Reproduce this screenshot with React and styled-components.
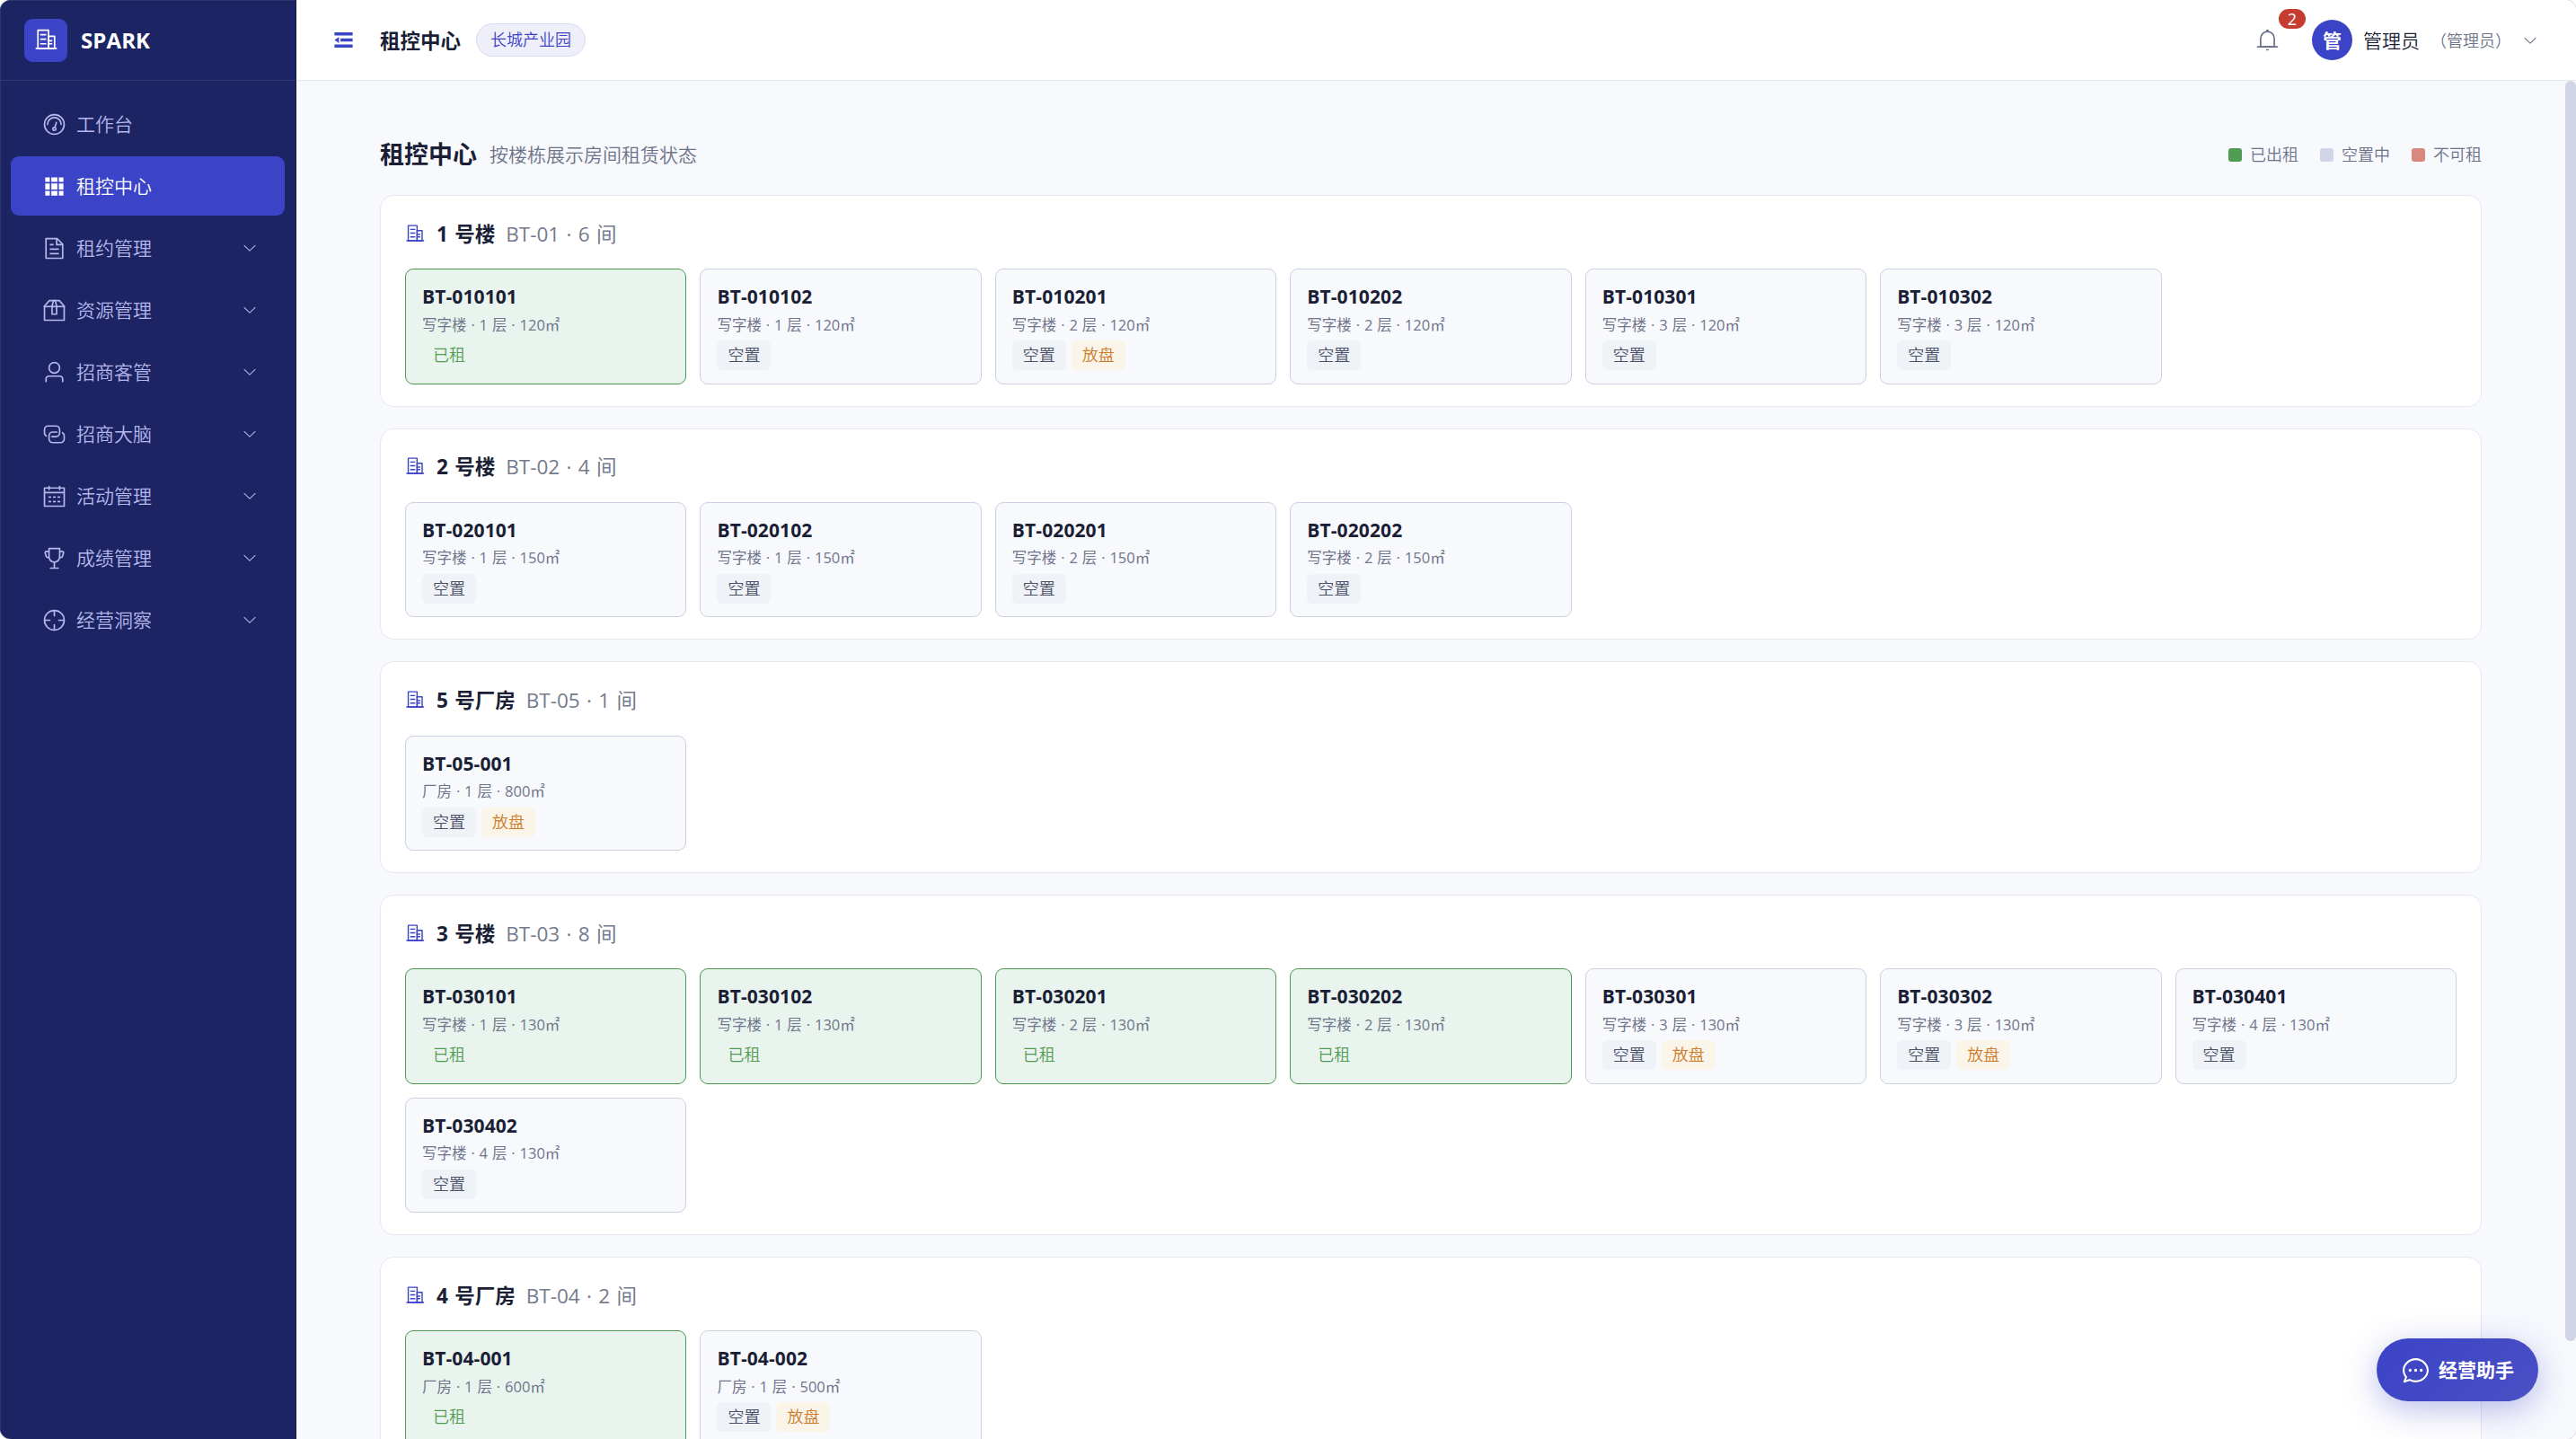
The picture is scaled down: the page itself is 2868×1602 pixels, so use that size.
import React from "react";
import styled, { createGlobalStyle, css } from "styled-components";

const ICONS = {
  building: [
    "M192 128v704h384V128zm-32-64h448a32 32 0 0 1 32 32v768a32 32 0 0 1-32 32H160a32 32 0 0 1-32-32V96a32 32 0 0 1 32-32",
    "M256 256h256v64H256zm0 192h256v64H256zm0 192h256v64H256zm384-128h128v64H640zm0 128h128v64H640zM64 832h896v64H64z",
    "M640 384v448h192V384zm-32-64h256a32 32 0 0 1 32 32v512a32 32 0 0 1-32 32H608a32 32 0 0 1-32-32V352a32 32 0 0 1 32-32",
  ],
  odometer: [
    "M512 896a384 384 0 1 0 0-768 384 384 0 0 0 0 768m0 64a448 448 0 1 1 0-896 448 448 0 0 1 0 896",
    "M192 512a320 320 0 1 1 640 0 32 32 0 1 1-64 0 256 256 0 1 0-512 0 32 32 0 0 1-64 0",
    "M570.432 627.84A96 96 0 1 1 509.568 608l60.992-187.776A32 32 0 1 1 631.424 440l-60.992 187.776zM502.08 734.464a32 32 0 1 0 19.84-60.928 32 32 0 0 0-19.84 60.928",
  ],
  grid: [
    "M640 384v256H384V384zm64 0h192v256H704zm-64 512H384V704h256zm64 0V704h192v192zm-64-768v192H384V128zm64 0h192v192H704zM320 384v256H128V384zm0 512H128V704h192zm0-768v192H128V128z",
  ],
  document: [
    "M832 384H576V128H192v768h640zm-26.496-64L640 154.496V320zM160 64h480l256 256v608a32 32 0 0 1-32 32H160a32 32 0 0 1-32-32V96a32 32 0 0 1 32-32m160 448h384v64H320zm0-192h160v64H320zm0 384h384v64H320z",
  ],
  box: [
    "M317.056 128 128 344.064V896h768V344.064L706.944 128zm-14.528-64h418.944a32 32 0 0 1 24.064 10.88l206.528 236.096A32 32 0 0 1 960 332.032V928a32 32 0 0 1-32 32H96a32 32 0 0 1-32-32V332.032a32 32 0 0 1 7.936-21.12L278.4 75.008A32 32 0 0 1 302.528 64",
    "M64 320h896v64H64z",
    "M448 327.872V640h128V327.872L526.08 128h-28.16zM448 64h128l64 256v352a32 32 0 0 1-32 32H416a32 32 0 0 1-32-32V320z",
  ],
  user: [
    "M512 512a192 192 0 1 0 0-384 192 192 0 0 0 0 384m0 64a256 256 0 1 1 0-512 256 256 0 0 1 0 512m320 320v-96a96 96 0 0 0-96-96H288a96 96 0 0 0-96 96v96a32 32 0 1 1-64 0v-96a160 160 0 0 1 160-160h448a160 160 0 0 1 160 160v96a32 32 0 1 1-64 0",
  ],
  connection: [
    "M640 384v64H448a128 128 0 0 0-128 128v128a128 128 0 0 0 128 128h320a128 128 0 0 0 128-128V576a128 128 0 0 0-64-110.848V394.88c74.56 26.368 128 97.472 128 181.056v128a192 192 0 0 1-192 192H448a192 192 0 0 1-192-192V576a192 192 0 0 1 192-192z",
    "M384 640v-64h192a128 128 0 0 0 128-128V320a128 128 0 0 0-128-128H256a128 128 0 0 0-128 128v128a128 128 0 0 0 64 110.848v70.272A192.06 192.06 0 0 1 64 448V320a192 192 0 0 1 192-192h320a192 192 0 0 1 192 192v128a192 192 0 0 1-192 192z",
  ],
  calendar: [
    "M128 384v512h768V192H768v32a32 32 0 1 1-64 0v-32H320v32a32 32 0 0 1-64 0v-32H128v128h768v64zm192-256h384V96a32 32 0 1 1 64 0v32h160a32 32 0 0 1 32 32v768a32 32 0 0 1-32 32H96a32 32 0 0 1-32-32V160a32 32 0 0 1 32-32h160V96a32 32 0 0 1 64 0zm-32 384h64a32 32 0 0 1 0 64h-64a32 32 0 0 1 0-64m0 192h64a32 32 0 1 1 0 64h-64a32 32 0 1 1 0-64m192-192h64a32 32 0 0 1 0 64h-64a32 32 0 0 1 0-64m0 192h64a32 32 0 1 1 0 64h-64a32 32 0 1 1 0-64m192-192h64a32 32 0 1 1 0 64h-64a32 32 0 1 1 0-64m0 192h64a32 32 0 1 1 0 64h-64a32 32 0 1 1 0-64",
  ],
  trophy: [
    "M480 896V702.08A256.256 256.256 0 0 1 264.064 512h-32.64a96 96 0 0 1-91.968-68.416L93.632 290.88a76.8 76.8 0 0 1 73.6-98.88H256V96a32 32 0 0 1 32-32h448a32 32 0 0 1 32 32v96h88.768a76.8 76.8 0 0 1 73.6 98.88L884.48 443.52A96 96 0 0 1 792.576 512h-32.64A256.256 256.256 0 0 1 544 702.08V896h128a32 32 0 1 1 0 64H352a32 32 0 1 1 0-64zm224-448V128H320v320a192 192 0 1 0 384 0m64 0h24.576a32 32 0 0 0 30.656-22.784l45.824-152.768A12.8 12.8 0 0 0 856.768 256H768zm-512 0V256h-88.768a12.8 12.8 0 0 0-12.288 16.448l45.824 152.768A32 32 0 0 0 231.424 448z",
  ],
  aim: [
    "M512 896a384 384 0 1 0 0-768 384 384 0 0 0 0 768m0 64a448 448 0 1 1 0-896 448 448 0 0 1 0 896",
    "M512 96a32 32 0 0 1 32 32v192a32 32 0 0 1-64 0V128a32 32 0 0 1 32-32m0 576a32 32 0 0 1 32 32v192a32 32 0 1 1-64 0V704a32 32 0 0 1 32-32M96 512a32 32 0 0 1 32-32h192a32 32 0 0 1 0 64H128a32 32 0 0 1-32-32m576 0a32 32 0 0 1 32-32h192a32 32 0 1 1 0 64H704a32 32 0 0 1-32-32",
  ],
  fold: [
    "M896 192H128v128h768zm0 256H384v128h512zm0 256H128v128h768zM320 384 128 512l192 128z",
  ],
  bell: [
    "M512 64a64 64 0 0 1 64 64v64H448v-64a64 64 0 0 1 64-64",
    "M256 768h512V448a256 256 0 1 0-512 0zm256-640a320 320 0 0 1 320 320v384H192V448a320 320 0 0 1 320-320",
    "M96 768h832q32 0 32 32t-32 32H96q-32 0-32-32t32-32m352 128h128a64 64 0 0 1-128 0",
  ],
  arrowDown: [
    "M831.872 340.864 512 652.672 192.128 340.864a30.592 30.592 0 0 0-42.752 0 29.12 29.12 0 0 0 0 41.6L489.664 714.24a32 32 0 0 0 44.672 0l340.288-331.712a29.12 29.12 0 0 0 0-41.728 30.592 30.592 0 0 0-42.752 0z",
  ],
  chat: [
    "m174.72 855.68 135.296-45.12 23.68 11.84C388.096 849.536 448.576 864 512 864c211.84 0 384-166.784 384-352S723.84 160 512 160 128 326.784 128 512c0 69.12 24.96 139.264 70.848 199.232l22.08 28.8-46.272 115.584zm-45.248 82.56A32 32 0 0 1 89.6 896l58.368-145.92C94.72 680.32 64 596.864 64 512 64 299.904 256 96 512 96s448 203.904 448 416-192 416-448 416a461.06 461.06 0 0 1-206.912-48.384l-175.616 58.56z",
    "M512 563.2a51.2 51.2 0 1 1 0-102.4 51.2 51.2 0 0 1 0 102.4m192 0a51.2 51.2 0 1 1 0-102.4 51.2 51.2 0 0 1 0 102.4m-384 0a51.2 51.2 0 1 1 0-102.4 51.2 51.2 0 0 1 0 102.4",
  ],
};

const MENU = [
  { icon: "odometer", label: "工作台" },
  { icon: "grid", label: "租控中心", active: true },
  { icon: "document", label: "租约管理", sub: true },
  { icon: "box", label: "资源管理", sub: true },
  { icon: "user", label: "招商客管", sub: true },
  { icon: "connection", label: "招商大脑", sub: true },
  { icon: "calendar", label: "活动管理", sub: true },
  { icon: "trophy", label: "成绩管理", sub: true },
  { icon: "aim", label: "经营洞察", sub: true },
];

const LEGEND = [
  { color: "#529b53", label: "已出租" },
  { color: "#d0d5e5", label: "空置中" },
  { color: "#d98880", label: "不可租" },
];

const room = (code, type, floor, area, rented = false, listed = false) => ({
  code,
  type,
  floor,
  area,
  rented,
  listed,
});

const BUILDINGS = [
  {
    name: "1 号楼",
    code: "BT-01",
    rooms: [
      room("BT-010101", "写字楼", 1, 120, true),
      room("BT-010102", "写字楼", 1, 120),
      room("BT-010201", "写字楼", 2, 120, false, true),
      room("BT-010202", "写字楼", 2, 120),
      room("BT-010301", "写字楼", 3, 120),
      room("BT-010302", "写字楼", 3, 120),
    ],
  },
  {
    name: "2 号楼",
    code: "BT-02",
    rooms: [
      room("BT-020101", "写字楼", 1, 150),
      room("BT-020102", "写字楼", 1, 150),
      room("BT-020201", "写字楼", 2, 150),
      room("BT-020202", "写字楼", 2, 150),
    ],
  },
  {
    name: "5 号厂房",
    code: "BT-05",
    rooms: [room("BT-05-001", "厂房", 1, 800, false, true)],
  },
  {
    name: "3 号楼",
    code: "BT-03",
    rooms: [
      room("BT-030101", "写字楼", 1, 130, true),
      room("BT-030102", "写字楼", 1, 130, true),
      room("BT-030201", "写字楼", 2, 130, true),
      room("BT-030202", "写字楼", 2, 130, true),
      room("BT-030301", "写字楼", 3, 130, false, true),
      room("BT-030302", "写字楼", 3, 130, false, true),
      room("BT-030401", "写字楼", 4, 130),
      room("BT-030402", "写字楼", 4, 130),
    ],
  },
  {
    name: "4 号厂房",
    code: "BT-04",
    rooms: [
      room("BT-04-001", "厂房", 1, 600, true),
      room("BT-04-002", "厂房", 1, 500, false, true),
    ],
  },
];

const Icon = ({ name, size }) => (
  <Svg viewBox="0 0 1024 1024" $size={size}>
    {ICONS[name].map((d) => (
      <path key={d} d={d} />
    ))}
  </Svg>
);

const RoomCard = ({ data }) => (
  <Card $rented={data.rented}>
    <RoomCode>{data.code}</RoomCode>
    <RoomMeta>
      {data.type} · {data.floor} 层 · {data.area}㎡
    </RoomMeta>
    <Tags>
      {data.rented ? (
        <Tag $kind="rented">已租</Tag>
      ) : (
        <Tag $kind="vacant">空置</Tag>
      )}
      {data.listed && <Tag $kind="listed">放盘</Tag>}
    </Tags>
  </Card>
);

const App = () => {
  return (
    <Window>
      <GlobalStyle />
      <Sidebar>
        <Brand>
          <Logo>
            <Icon name="building" size={27} />
          </Logo>
          <BrandName>SPARK</BrandName>
        </Brand>
        <Menu>
          {MENU.map((e) => (
            <MenuItem key={e.label} $active={e.active}>
              <Icon name={e.icon} size={27} />
              <MenuLabel>{e.label}</MenuLabel>
              {e.sub && <Icon name="arrowDown" size={18} />}
            </MenuItem>
          ))}
        </Menu>
      </Sidebar>

      <Main>
        <Header>
          <FoldButton>
            <Icon name="fold" size={27} />
          </FoldButton>
          <HeaderTitle>租控中心</HeaderTitle>
          <ParkTag>长城产业园</ParkTag>
          <Account>
            <BellButton>
              <Icon name="bell" size={27} />
              <Badge>2</Badge>
            </BellButton>
            <Avatar>管</Avatar>
            <UserName>管理员</UserName>
            <Role>（管理员）</Role>
            <Icon name="arrowDown" size={18} />
          </Account>
        </Header>

        <Body>
          <Content>
            <PageHead>
              <PageTitle>租控中心</PageTitle>
              <PageDesc>按楼栋展示房间租赁状态</PageDesc>
              <Legend>
                {LEGEND.map((e) => (
                  <LegendItem key={e.label}>
                    <Swatch $color={e.color} />
                    <LegendLabel>{e.label}</LegendLabel>
                  </LegendItem>
                ))}
              </Legend>
            </PageHead>
            {BUILDINGS.map((b) => (
              <Panel key={b.code}>
                <PanelHead>
                  <Icon name="building" size={22.5} />
                  <PanelTitle>{b.name}</PanelTitle>
                  <PanelMeta>
                    {b.code} · {b.rooms.length} 间
                  </PanelMeta>
                </PanelHead>
                <Rooms>
                  {b.rooms.map((r) => (
                    <RoomCard key={r.code} data={r} />
                  ))}
                </Rooms>
              </Panel>
            ))}
          </Content>
          <ScrollTrack>
            <ScrollThumb />
          </ScrollTrack>
        </Body>
      </Main>

      <Assistant>
        <Icon name="chat" size={33} />
        <AssistantLabel>经营助手</AssistantLabel>
      </Assistant>
    </Window>
  );
};

export default App;

const GlobalStyle = createGlobalStyle`
  * {
    box-sizing: border-box;
  }
  body {
    margin: 0;
    background: #fff;
    font-family: "Open Sans", "Noto Sans CJK SC", sans-serif;
    font-size: 21px;
    font-weight: 350;
    color: #1a1f36;
  }
  h1, h2, h3, p {
    margin: 0;
  }
  button {
    font-family: inherit;
    border: none;
    padding: 0;
    background: none;
  }
`;

const Svg = styled.svg`
  width: ${(p) => p.$size}px;
  height: ${(p) => p.$size}px;
  flex-shrink: 0;
  fill: currentColor;
`;

const Window = styled.div`
  position: relative;
  display: flex;
  width: 100vw;
  height: 100vh;
  overflow: hidden;
  border-radius: 12px;
  box-shadow: 0 0 0 1px #dcdcde;
`;

const Sidebar = styled.aside`
  width: 330px;
  flex-shrink: 0;
  background: #1d2464;
  border-right: 1px solid #14193f;
  box-shadow: inset 1px 1px 0 #2f366f;
`;

const Brand = styled.div`
  display: flex;
  align-items: center;
  gap: 15px;
  height: 90px;
  padding: 0 27px;
  border-bottom: 1px solid #333974;
`;

const Logo = styled.div`
  display: flex;
  align-items: center;
  justify-content: center;
  width: 48px;
  height: 48px;
  padding-bottom: 1px;
  border-radius: 9px;
  background: #3b43c6;
  color: #fff;
`;

const BrandName = styled.span`
  font-size: 24px;
  font-weight: 700;
  letter-spacing: 0.1px;
  color: #fff;
`;

const Menu = styled.nav`
  display: flex;
  flex-direction: column;
  gap: 3px;
  padding: 15px 12px;
`;

const MenuItem = styled.div`
  display: flex;
  align-items: center;
  height: 66px;
  padding: 0 30px 0 35px;
  border-radius: 9px;
  color: #b4b8ea;
  ${(p) =>
    p.$active &&
    css`
      background: #3b43c6;
      color: #fff;
    `}
`;

const MenuLabel = styled.span`
  flex: 1;
  margin-left: 11px;
  padding-bottom: 2px;
`;

const Main = styled.main`
  display: flex;
  flex-direction: column;
  flex: 1;
  min-width: 0;
`;

const Header = styled.header`
  display: flex;
  align-items: center;
  height: 90px;
  flex-shrink: 0;
  padding: 0 42px 0 39px;
  background: #fff;
  border-bottom: 1px solid #e6e8f0;
`;

const FoldButton = styled.button`
  display: flex;
  color: #3b43c6;
`;

const HeaderTitle = styled.h2`
  margin-left: 27px;
  padding-bottom: 1px;
  font-size: 22.5px;
  font-weight: 700;
`;

const ParkTag = styled.span`
  display: flex;
  align-items: center;
  height: 37px;
  margin-left: 17px;
  padding: 0 15px 3px;
  border: 1px solid #d8daf3;
  border-radius: 19px;
  background: #efeffa;
  color: #3b43c6;
  font-size: 18px;
`;

const Account = styled.div`
  display: flex;
  align-items: center;
  margin-left: auto;
  color: #6b7289;
`;

const BellButton = styled.button`
  position: relative;
  display: flex;
  color: inherit;
`;

const Badge = styled.span`
  position: absolute;
  left: 26px;
  top: -21px;
  width: 30px;
  height: 22px;
  border-radius: 11px;
  background: #c43d30;
  color: #fff;
  font-size: 18px;
  font-weight: 400;
  line-height: 22px;
  text-align: center;
`;

const Avatar = styled.span`
  display: flex;
  align-items: center;
  justify-content: center;
  width: 45px;
  height: 45px;
  margin-left: 36px;
  padding-bottom: 2px;
  border-radius: 50%;
  background: #3b43c6;
  color: #fff;
  font-weight: 700;
`;

const UserName = styled.span`
  margin-left: 12px;
  padding-bottom: 1px;
  color: #1a1f36;
`;

const Role = styled.span`
  margin: 0 12px;
  padding-bottom: 1px;
  font-size: 18px;
`;

const Body = styled.div`
  display: flex;
  flex: 1;
  min-height: 0;
  background: #f8f9fd;
`;

const Content = styled.div`
  display: flex;
  flex-direction: column;
  flex: 1;
  gap: 24px;
  padding: 61px 93px 0;
  overflow: hidden;
`;

const PageHead = styled.div`
  display: flex;
  align-items: center;
  height: 42px;
  flex-shrink: 0;
`;

const PageTitle = styled.h1`
  padding-bottom: 3px;
  font-size: 27px;
  font-weight: 700;
`;

const PageDesc = styled.p`
  margin-left: 14px;
  padding-bottom: 3px;
  color: #6b7289;
`;

const Legend = styled.div`
  display: flex;
  gap: 24px;
  margin-left: auto;
`;

const LegendItem = styled.span`
  display: flex;
  align-items: center;
  gap: 9px;
  font-size: 18px;
  color: #6b7289;
`;

const LegendLabel = styled.span`
  padding-bottom: 3px;
`;

const Swatch = styled.i`
  width: 15px;
  height: 15px;
  border-radius: 3px;
  background: ${(p) => p.$color};
`;

const Panel = styled.section`
  flex-shrink: 0;
  padding: 24px 27px;
  border: 1px solid #e6e8f0;
  border-radius: 15px;
  background: #fff;
`;

const PanelHead = styled.div`
  display: flex;
  align-items: center;
  height: 36px;
  margin-bottom: 21.2px;
  font-size: 22.5px;
  word-spacing: 1.5px;
  > svg {
    color: #3b43c6;
  }
`;

const PanelTitle = styled.h3`
  margin-left: 12.5px;
  padding-bottom: 1.5px;
  font-size: inherit;
  font-weight: 700;
`;

const PanelMeta = styled.span`
  margin-left: 12px;
  padding-bottom: 1.5px;
  font-weight: 400;
  color: #757b8c;
`;

const Rooms = styled.div`
  display: grid;
  grid-template-columns: repeat(7, 1fr);
  gap: 15px;
`;

const Card = styled.div`
  height: 128.5px;
  padding: 15px 18px 0;
  border: 1px solid ${(p) => (p.$rented ? "#4a994d" : "#cbd0e2")};
  border-radius: 9px;
  background: ${(p) => (p.$rented ? "#eaf4ee" : "#f8f9fd")};
`;

const RoomCode = styled.div`
  line-height: 31.5px;
  font-size: 21px;
  font-weight: 700;
  letter-spacing: 0.1px;
`;

const RoomMeta = styled.div`
  margin: 2px 0 5.5px;
  line-height: 25px;
  font-size: 16.5px;
  font-weight: 400;
  word-spacing: 0.6px;
  color: #6f768b;
`;

const Tags = styled.div`
  display: flex;
  gap: 6px;
`;

const TAG_STYLES = {
  rented: css`
    color: #529b53;
    background: #eaf4ee;
  `,
  vacant: css`
    color: #4a5168;
    background: #eff2f7;
  `,
  listed: css`
    color: #cb7d2b;
    background: #fbf4e8;
  `,
};

const Tag = styled.span`
  height: 33px;
  padding: 0 12px;
  border-radius: 6px;
  font-size: 18px;
  line-height: 32px;
  ${(p) => TAG_STYLES[p.$kind]}
`;

const ScrollTrack = styled.div`
  width: 12px;
  flex-shrink: 0;
`;

const ScrollThumb = styled.div`
  height: 1403px;
  border-radius: 6px;
  background: #d0d5e5;
`;

const Assistant = styled.button`
  position: absolute;
  right: 42px;
  bottom: 42px;
  display: flex;
  align-items: center;
  gap: 9px;
  height: 70px;
  padding: 0 27px;
  border-radius: 35px;
  background: linear-gradient(135deg, #3b43c6, #4a50c4);
  box-shadow: 0 9px 36px rgba(59, 67, 198, 0.35);
  color: #fff;
  font-size: 21px;
  font-weight: 700;
`;

const AssistantLabel = styled.span`
  padding-bottom: 2px;
`;
